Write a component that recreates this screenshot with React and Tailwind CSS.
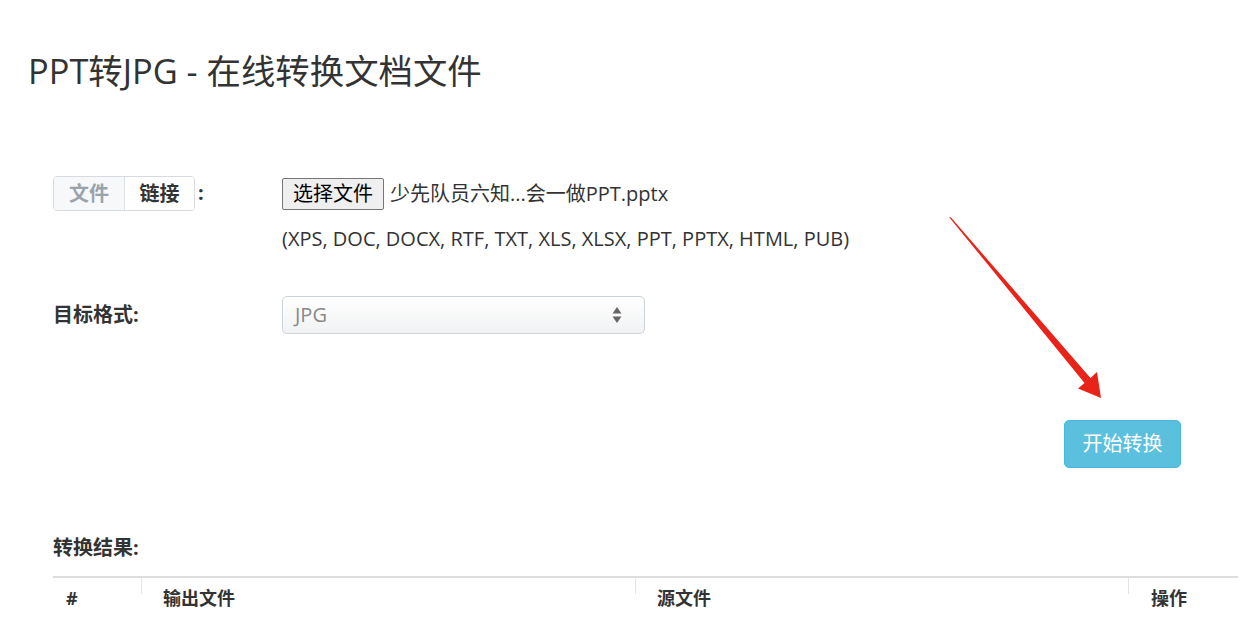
import React from "react";

const font = { fontFamily: '"Open Sans", "Noto Sans CJK SC", sans-serif' };

const Arrow = () => (
  <svg
    className="absolute left-[940px] top-[208px] pointer-events-none"
    width="180"
    height="200"
    viewBox="940 208 180 200"
  >
    <polygon
      points="949,217 951,217.5 1090.5,378 1097,372 1101,398 1078,388.5 1084.5,383"
      fill="#e8231a"
    />
  </svg>
);

const App = () => {
  return (
    <div className="relative min-h-screen bg-white text-[#333]" style={font}>
      <h1 className="pl-[28px] pt-[51px] text-[34.4px] leading-[40px] font-normal">
        PPT转JPG - 在线转换文档文件
      </h1>

      <div className="px-[53px] mt-[85px]">
        <div className="grid grid-cols-[229px_1fr]">
          <div className="flex items-start">
            <div className="flex h-[35px] border border-[#d5dbe1] rounded-[4px] overflow-hidden text-[20px] font-bold">
              <div className="w-[71px] flex items-center justify-center bg-[#f6f8fa] text-[#9aa3ab] border-r border-[#dde2e7]">
                文件
              </div>
              <div className="w-[69px] flex items-center justify-center bg-white text-[#333]">
                链接
              </div>
            </div>
            <span className="ml-[3px] text-[20px] leading-[33px] font-bold">:</span>
          </div>
          <div>
            <div className="flex items-center h-[35px] text-[20px]">
              <button className="h-[32px] w-[102px] bg-[#efefef] border border-[#767676] rounded-[2px] text-[20px] text-black leading-none">
                选择文件
              </button>
              <span className="ml-[6px]">少先队员六知...会一做PPT.pptx</span>
            </div>
            <div className="mt-[14px] text-[20px] leading-[28px]">
              (XPS, DOC, DOCX, RTF, TXT, XLS, XLSX, PPT, PPTX, HTML, PUB)
            </div>
          </div>
        </div>

        <div className="grid grid-cols-[229px_1fr] mt-[43px] items-center">
          <div className="text-[20px] font-bold">目标格式:</div>
          <div className="w-[363px] h-[38px] border border-[#ccd3da] rounded-[5px] bg-gradient-to-b from-white to-[#f1f2f3] flex items-center justify-between pl-[12px] pr-[22px] text-[20px] text-[#888]">
            <span>JPG</span>
            <svg width="10" height="18" viewBox="0 0 10 18">
              <polygon points="5,1 9.5,7.5 0.5,7.5" fill="#666" />
              <polygon points="5,17 9.5,10.5 0.5,10.5" fill="#666" />
            </svg>
          </div>
        </div>

        <div className="flex justify-end mt-[86px] pr-[8px]">
          <button className="w-[117px] h-[48px] bg-[#5bc0de] border border-[#46b8da] rounded-[5px] text-white text-[20px]">
            开始转换
          </button>
        </div>

        <div className="mt-[66px] text-[20px] leading-[28px] font-bold">转换结果:</div>

        <div className="mt-[14px] mr-[-49px] border-t-2 border-[#dddddd] flex text-[18px] font-bold">
          <div className="w-[88px] pl-[13px] pt-[7px] pb-[8px]">#</div>
          <div className="w-[494px] relative pl-[22px] pt-[7px] pb-[8px]">
            <span className="absolute left-0 top-0 h-[16px] border-l border-[#e4e4e4]" />
            输出文件
          </div>
          <div className="w-[493px] relative pl-[22px] pt-[7px] pb-[8px]">
            <span className="absolute left-0 top-0 h-[16px] border-l border-[#e4e4e4]" />
            源文件
          </div>
          <div className="flex-1 relative pl-[23px] pt-[7px] pb-[8px]">
            <span className="absolute left-0 top-0 h-[16px] border-l border-[#e4e4e4]" />
            操作
          </div>
        </div>
      </div>

      <Arrow />
    </div>
  );
};

export default App;
